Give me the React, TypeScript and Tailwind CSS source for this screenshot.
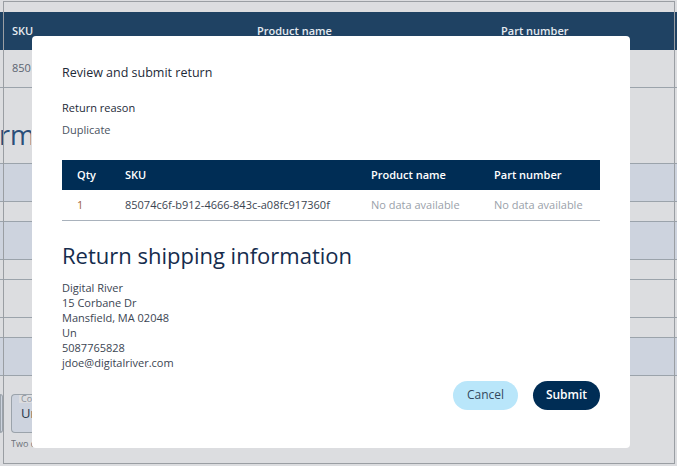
const font = { fontFamily: '"Open Sans", "Liberation Sans", sans-serif' };

function BackgroundPage() {
  return (
    <div className="flex flex-col">
      <div className="h-[12px]" />
      <div className="h-[38px] bg-[#1f4263] flex items-center text-[11px] font-semibold text-[#e6ebf0]">
        <span className="w-[257px] pl-[12px]">SKU</span>
        <span className="w-[244px]">Product name</span>
        <span>Part number</span>
      </div>
      <div className="h-[38px] border-b border-[#9ba3ab] flex items-center pl-[12px] text-[11px] text-[#5b6470]">
        <span className="w-[20px] overflow-hidden whitespace-nowrap">850</span>
      </div>
      <div className="h-[75px] flex items-center">
        <span className="w-[32px] overflow-hidden whitespace-nowrap text-[27px] text-[#2a4f7a] -ml-[1px] pt-[20px]">rma</span>
      </div>
      <div className="flex flex-col">
        <div className="h-[39px] bg-[#cdd3de] border-y border-[#9ba3ab]" />
        <div className="h-[19px]" />
        <div className="h-[39px] bg-[#cdd3de] border-y border-[#9ba3ab]" />
        <div className="h-[19px]" />
        <div className="h-[39px] border-y border-[#9ba3ab]" />
        <div className="h-[19px]" />
        <div className="h-[39px] bg-[#cdd3de] border-y border-[#9ba3ab]" />
      </div>
      <div className="flex gap-[8px] mt-[18px]">
        <div className="w-[3px] h-[39px] border border-[#9ba3ab] rounded-r-[4px] bg-[#cdd3de]" />
        <div className="flex flex-col gap-[4px]">
          <div className="relative w-[22px] h-[39px] border border-r-0 border-[#9ba3ab] rounded-l-[4px] bg-[#cdd3de] flex items-center pl-[9px] text-[13px] text-[#2a3a4c] overflow-hidden whitespace-nowrap">
            <span className="absolute -top-[1px] left-[7px] px-[2px] bg-[#dcdde0] text-[9px] leading-[9px] text-[#8a9099]">Co</span>
            Un
          </div>
          <span className="w-[22px] overflow-hidden whitespace-nowrap text-[9px] text-[#6c7178]">Two c</span>
        </div>
      </div>
    </div>
  );
}

export default function App() {
  return (
    <div className="relative w-[677px] h-[466px] overflow-hidden bg-[#dcdde0]" style={font}>
      <BackgroundPage />
      <div className="absolute left-[3px] top-[1px] w-[672px] h-[463px] border border-[#9a9ea3] pointer-events-none" />
      <div className="absolute left-[32px] top-[36px] w-[598px] h-[412px] bg-white rounded-[4px] px-[30px] pt-[29px] flex flex-col">
        <h2 className="text-[12.5px] font-medium text-[#1d2a38] leading-[16px]">Review and submit return</h2>
        <div className="mt-[20px] text-[11px] font-medium text-[#1d2a38] leading-[14px]">Return reason</div>
        <div className="mt-[8px] text-[11px] text-[#4a5360] leading-[14px]">Duplicate</div>
        <table className="mt-[23px] w-[538px] text-[11px] border-collapse">
          <thead>
            <tr className="bg-[#002d55] text-white h-[30px] text-left">
              <th className="font-semibold pl-[15px] w-[63px]">Qty</th>
              <th className="font-semibold w-[246px]">SKU</th>
              <th className="font-semibold w-[123px]">Product name</th>
              <th className="font-semibold">Part number</th>
            </tr>
          </thead>
          <tbody>
            <tr className="h-[30px] border-b border-[#a9b2bc]">
              <td className="pl-[15px] text-[#a0643c]">1</td>
              <td className="text-[#3b4552]">85074c6f-b912-4666-843c-a08fc917360f</td>
              <td className="text-[#9aa1aa]">No data available</td>
              <td className="text-[#9aa1aa]">No data available</td>
            </tr>
          </tbody>
        </table>
        <h3 className="mt-[19px] text-[22px] text-[#152c4d] leading-[30px]">Return shipping information</h3>
        <div className="mt-[10px] text-[11px] text-[#3b4552] leading-[15px] flex flex-col">
          <span>Digital River</span>
          <span>15 Corbane Dr</span>
          <span>Mansfield, MA 02048</span>
          <span>Un</span>
          <span>5087765828</span>
          <span>jdoe@digitalriver.com</span>
        </div>
        <div className="mt-[11px] flex justify-end gap-[15px]">
          <button className="h-[29px] w-[65px] rounded-full bg-[#b9e6fa] text-[12px] text-[#33485e]">Cancel</button>
          <button className="h-[29px] w-[67px] rounded-full bg-[#002d55] text-[12px] font-semibold text-white">Submit</button>
        </div>
      </div>
    </div>
  );
}
